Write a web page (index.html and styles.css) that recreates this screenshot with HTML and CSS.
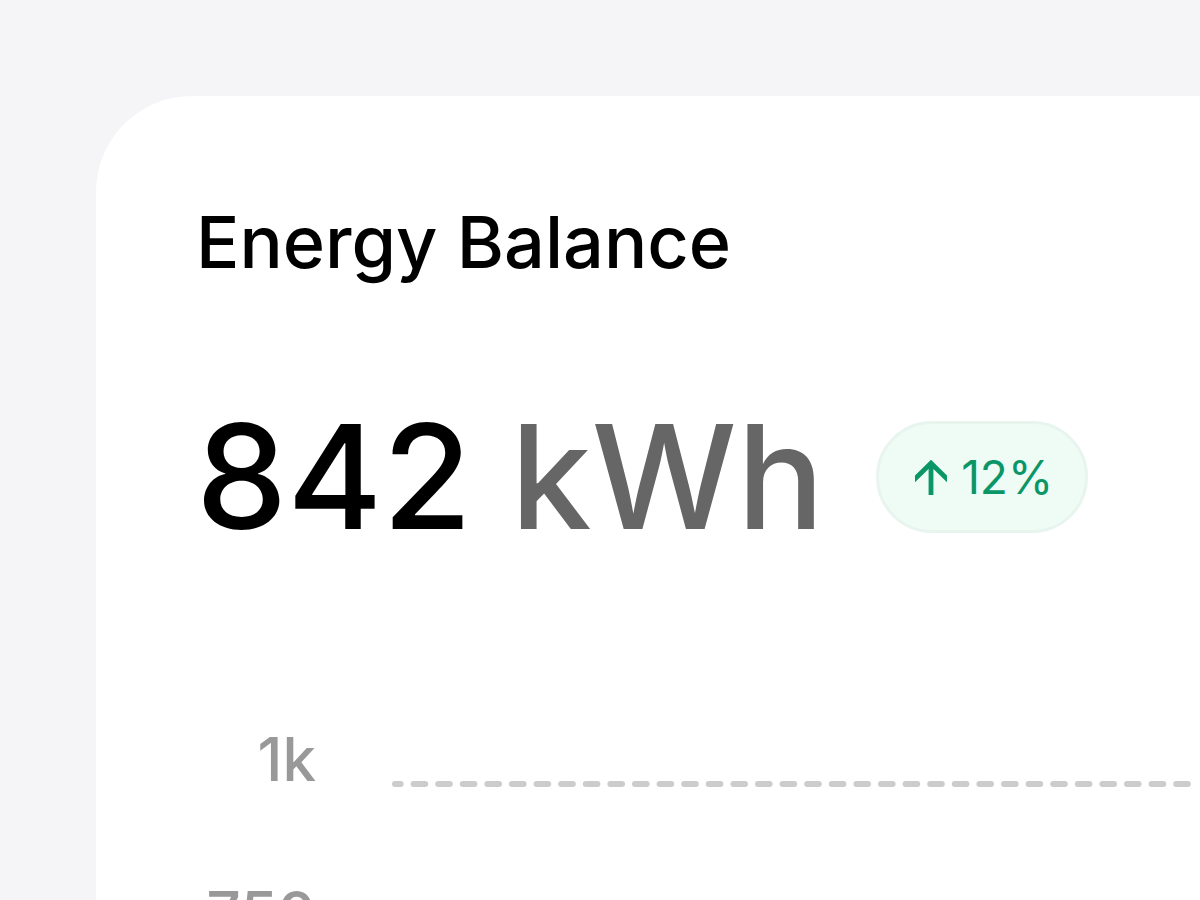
FILE: index.html
```html
<!DOCTYPE html>
<html lang="en">

<head>

  <meta charset="utf-8">
  <meta name="viewport" content="width=device-width, initial-scale=1">

  <title>Energy Balance</title>

  <link rel="stylesheet" href="styles.css">
</head>

<body>

  <main class="card">
    <h1 class="title">Energy Balance</h1>

    <div class="summary">
      <p class="total">842 <span class="unit">kWh</span></p>
      <p class="badge">
        <svg class="arrow" width="32" height="36" viewBox="0 0 32 36" fill="none" stroke="currentColor" stroke-width="4.8" aria-hidden="true">
          <path d="M16 36V5M-3 22.8L16 4.2L35 22.8"></path>
        </svg>
        12%
      </p>
    </div>

    <div class="chart">
      <div class="row">
        <span class="label">1k</span>
        <svg class="grid-line" height="6" aria-hidden="true">
          <line x1="3" y1="3" x2="100%" y2="3"></line>
        </svg>
      </div>
      <div class="row">
        <span class="label">750</span>
        <svg class="grid-line" height="6" aria-hidden="true">
          <line x1="3" y1="3" x2="100%" y2="3"></line>
        </svg>
      </div>
    </div>
  </main>

</body>

</html>
```

FILE: styles.css
```css
* {
  box-sizing: border-box;
}

body {
  margin: 0;
  height: 100vh;
  padding: 96px 0 0 96px;
  overflow: hidden;
  background: #f5f5f8;
  font-family: Inter, "Liberation Sans", sans-serif;
}

.card {
  padding: 102px 0 0 100px;
  background: #fff;
  border-top-left-radius: 96px;
}

.title {
  margin: 0;
  font-size: 72px;
  line-height: 88px;
  font-weight: 500;
  color: #000;
}

.summary {
  display: flex;
  align-items: center;
  gap: 52px;
  margin-top: 103px;
}

.total {
  margin: 0;
  font-size: 145px;
  line-height: 176px;
  font-weight: 500;
  color: #000;
  white-space: nowrap;
}

.unit {
  color: #666;
}

.badge {
  display: flex;
  align-items: center;
  gap: 14px;
  margin: 0;
  padding: 24px 32px 24px 36px;
  border: 3px solid #e8f5ef;
  border-radius: 56px;
  background: #effcf6;
  font-size: 46px;
  line-height: 58px;
  color: #0b9667;
}

.arrow {
  flex: none;
}

.chart {
  margin-top: 158px;
}

.row {
  display: flex;
  align-items: flex-start;
  gap: 76px;
  height: 154px;
}

.label {
  width: 120px;
  font-size: 60px;
  line-height: 72px;
  font-weight: 500;
  text-align: right;
  color: #999;
}

.grid-line {
  flex: 1;
  margin-top: 58px;
}

.grid-line line {
  stroke: #ccc;
  stroke-width: 6;
  stroke-linecap: round;
  stroke-dasharray: 11.6 13;
  stroke-dashoffset: 6;
}
```
